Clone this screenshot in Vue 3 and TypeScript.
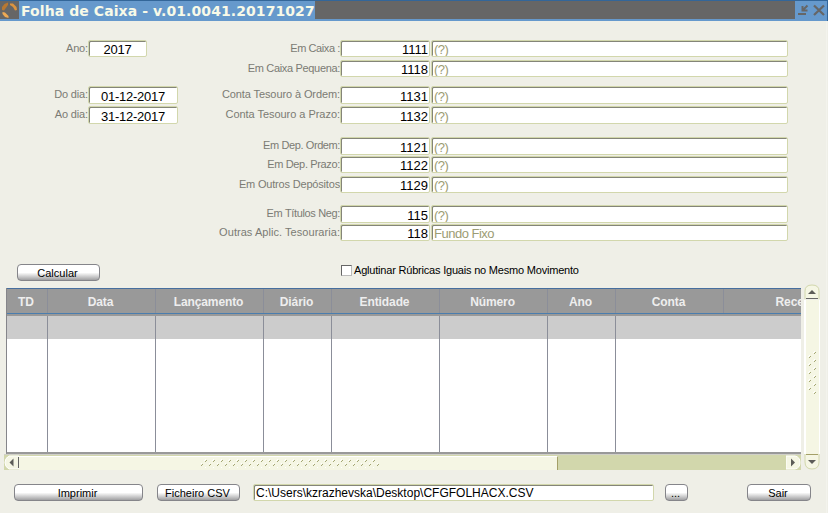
<script setup lang="ts">
interface Row {
  label: string
  code: string
  desc: string
  spacing: number
  tall?: boolean
  left?: { label: string; value: string; kind: string }
}

const rows: Row[] = [
  { label: 'Em Caixa :', spacing: -0.4, code: '1111', desc: '(?)', left: { label: 'Ano:', value: '2017', kind: 'year' } },
  { label: 'Em Caixa Pequena:', spacing: -0.33, code: '1118', desc: '(?)' },
  { label: 'Conta Tesouro à Ordem:', spacing: -0.1, code: '1131', desc: '(?)', tall: true, left: { label: 'Do dia:', value: '01-12-2017', kind: 'date' } },
  { label: 'Conta Tesouro a Prazo:', spacing: -0.04, code: '1132', desc: '(?)', tall: true, left: { label: 'Ao dia:', value: '31-12-2017', kind: 'date' } },
  { label: 'Em Dep. Ordem:', spacing: -0.4, code: '1121', desc: '(?)', tall: true },
  { label: 'Em Dep. Prazo:', spacing: -0.35, code: '1122', desc: '(?)' },
  { label: 'Em Outros Depósitos', spacing: -0.18, code: '1129', desc: '(?)' },
  { label: 'Em Títulos Neg:', spacing: -0.35, code: '115', desc: '(?)', tall: true },
  { label: 'Outras Aplic. Tesouraria:', spacing: 0.05, code: '118', desc: 'Fundo Fixo' },
]

const columns: string[] = ['TD', 'Data', 'Lançamento', 'Diário', 'Entidade', 'Número', 'Ano', 'Conta', 'Receita']
</script>

<template>
  <div class="window">
    <header class="titlebar">
      <svg class="logo" width="19" height="18" viewBox="0 0 19 18">
        <rect width="19" height="18" fill="#666" />
        <path d="M8 1.500 4.500 3 2 6v3l2 .5L8 4z" fill="#b87832" />
        <path d="M10 2.500h3L16.500 6l.5 3-2 .5L13 6l-3-2z" fill="#dc943f" />
        <path d="M2.500 11 5 11.500 8.500 15v2L5 16l-2.500-3z" fill="#eeaa54" />
      </svg>
      <h1 class="title"><span>Folha de Caixa - v.01.0041.20171027</span></h1>
      <div class="rest"></div>
      <svg class="controls" width="32" height="19" viewBox="0 0 32 19">
        <g stroke="#666" fill="none">
          <path d="M3 13h8" stroke-width="2" />
          <path d="M12.500 4.500 8 9M7.500 5v4.500h5" stroke-width="2" />
          <path d="m19 4.500 10 9.500M29 4.500 19 14" stroke-width="2.300" />
        </g>
      </svg>
    </header>

    <main class="content">
      <section class="form">
        <template v-for="row in rows" :key="row.code">
          <label class="label side">{{ row.left?.label }}</label>
          <div class="slot">
            <div v-if="row.left" class="field center" :class="[row.left.kind, { tall: row.tall }]">{{ row.left.value }}</div>
          </div>
          <label class="label" :style="{ letterSpacing: row.spacing + 'px' }">{{ row.label }}</label>
          <div class="field code" :class="{ tall: row.tall }">{{ row.code }}</div>
          <div class="field desc" :class="{ tall: row.tall }">{{ row.desc }}</div>
        </template>
      </section>

      <section class="actions">
        <button class="btn calc">Calcular</button>
        <div class="check"><i class="box"></i><span>Aglutinar Rúbricas Iguais no Mesmo Movimento</span></div>
      </section>

      <section class="data">
        <div class="left-pane">
          <div class="table">
            <div class="cols head"><div v-for="c in columns" :key="c"><span>{{ c }}</span></div></div>
            <div class="cols selected"><div v-for="c in columns" :key="c"></div></div>
            <div class="cols blank"><div v-for="c in columns" :key="c"></div></div>
          </div>
          <div class="hscroll">
            <svg class="end-l" width="15" height="15" viewBox="0 0 15 15">
              <path d="M15 1H5Q1 3 1 7.500T5 14h10z" fill="#f5f6e4" stroke="#fff" />
              <path d="m5.500 7.500 4-4v8z" fill="#5c5c58" />
              <path d="M14.500 2v11" stroke="#666" />
            </svg>
            <div class="thumb">
              <svg width="180" height="10">
                <defs>
                  <pattern id="grip-h" width="8" height="8" patternUnits="userSpaceOnUse">
                    <path d="m4 3 2-2M0 7l2-2" stroke="#a4a675" />
                    <path d="m3 2 2-2M-1 6l2-2" stroke="#fff" />
                  </pattern>
                </defs>
                <rect width="179" height="9" fill="url(#grip-h)" />
              </svg>
            </div>
            <svg class="end-r" width="15" height="15" viewBox="0 0 15 15">
              <path d="M0 1h9q5 1 5 6.500T9 14H0z" fill="#f5f6e4" stroke="#fff" />
              <path d="m9 7.500-4-4v8z" fill="#5c5c58" />
            </svg>
          </div>
        </div>
        <div class="vscroll">
          <svg width="16" height="16" viewBox="0 0 16 16">
            <path d="M1 15V7q0-6 7-6t7 6v8" fill="#f5f6e4" stroke="#d2d7ac" />
            <path d="m4 10 4-4 4 4z" fill="#5c5c58" />
            <path d="M2 14.500h12" stroke="#666" />
          </svg>
          <div class="vthumb">
            <svg width="10" height="45">
              <defs>
                <pattern id="grip-v" width="10" height="8" patternUnits="userSpaceOnUse">
                  <path d="m6 3 2-2M1 7l2-2" stroke="#a4a675" />
                  <path d="m5 2 2-2M0 6l2-2" stroke="#fff" />
                </pattern>
              </defs>
              <rect width="10" height="44" fill="url(#grip-v)" />
            </svg>
          </div>
          <svg width="16" height="16" viewBox="0 0 16 16">
            <path d="M1 0v8q0 7 7 7t7-7V0" fill="#f5f6e4" stroke="#d2d7ac" />
            <path d="m4 6 4 4 4-4z" fill="#5c5c58" />
            <path d="M2 .5h12" stroke="#a4a068" />
          </svg>
        </div>
      </section>

      <footer class="footer">
        <button class="btn print">Imprimir</button>
        <button class="btn csv">Ficheiro CSV</button>
        <div class="field path">C:\Users\kzrazhevska\Desktop\CFGFOLHACX.CSV</div>
        <button class="btn browse">...</button>
        <button class="btn exit">Sair</button>
      </footer>
    </main>
  </div>
</template>

<style>
body {
  margin: 0;
  background: #efefe7;
}
</style>

<style scoped>
* {
  box-sizing: border-box;
}
.window {
  width: 828px;
  height: 513px;
  overflow: hidden;
  background: #efefe7;
  font-family: "Liberation Sans", Arial, sans-serif;
  display: flex;
  flex-direction: column;
}
.titlebar {
  height: 21px;
  flex: none;
  display: flex;
  background: #6699cc;
  border-top: 1px solid #336699;
  border-right: 1px solid #336699;
}
.titlebar svg {
  flex: none;
}
.title {
  margin: 0;
  width: 296px;
  flex: none;
  padding-left: 2px;
  font: bold 14px/20px "DejaVu Sans", Verdana, sans-serif;
  letter-spacing: 0.08px;
  color: #f8fae8;
  white-space: nowrap;
}
.rest {
  flex: 1;
  height: 18px;
  background: #666;
}
.content {
  width: 827px;
  flex: 1;
  border-right: 1px solid #f3f3ed;
}
.form {
  height: 243px;
  padding-top: 19px;
  display: grid;
  grid-template-columns: 88px 120px 132px 91px 357px;
  grid-template-rows: 20px 26px 20px 31px 19px 20px 29px 19px 18px;
  align-items: start;
}
.label {
  text-align: right;
  font-size: 11px;
  line-height: 16px;
  color: #7b7b74;
  white-space: nowrap;
}
.side {
  letter-spacing: -0.15px;
}
.field {
  height: 17px;
  border: 1px solid #d2d7ac;
  border-radius: 2px;
  background: #fff;
  box-shadow: inset 1px 1px 0 #848578;
  font-size: 13px;
  line-height: 18px;
  color: #000;
  white-space: nowrap;
  overflow: hidden;
}
.field.tall {
  height: 18px;
  line-height: 19px;
}
.center {
  text-align: center;
  letter-spacing: -0.25px;
}
.year {
  width: 59px;
}
.date {
  width: 90px;
}
.code {
  width: 90px;
  padding-right: 1px;
  text-align: right;
}
.desc {
  padding-left: 2px;
  letter-spacing: -0.5px;
  color: #9c9c74;
}
.actions {
  height: 20px;
  padding-left: 17px;
  display: flex;
}
.btn {
  height: 17px;
  padding: 1px 2px 0 0;
  flex: none;
  border: 1px solid #85858a;
  border-radius: 4px;
  background: linear-gradient(#fff 50%, #e3e3e3 65%, #a0a0a2);
  font: 11px/14px "Liberation Sans", Arial, sans-serif;
  color: #000;
}
.calc {
  width: 83px;
}
.check {
  margin-left: 241px;
  display: flex;
  gap: 2px;
  font-size: 11px;
  line-height: 12px;
  letter-spacing: -0.2px;
  white-space: nowrap;
}
.box {
  width: 11px;
  height: 11px;
  margin-top: 1px;
  border: 1px solid #666;
  border-right-color: #bbb;
  border-bottom-color: #bbb;
  background: #fff;
}
.data {
  display: flex;
  gap: 2px;
  padding-left: 4px;
  height: 186px;
}
.left-pane {
  width: 798px;
  padding-top: 4px;
}
.table {
  width: 795px;
  margin-left: 2px;
  height: 166px;
  border-left: 1px solid #85858a;
  border-bottom: 2px solid #999;
  background: #fff;
  overflow: hidden;
}
.cols {
  display: grid;
  width: 865px;
  grid-template-columns: 41px 108px 108px 68px 108px 108px 68px 108px 148px;
}
.cols > div {
  border-right: 1px solid #8b8e99;
}
.head {
  height: 26px;
  border-top: 1px solid #476f9f;
  border-bottom: 1px solid #4a7dae;
  background: #999;
  color: #eee;
  font-weight: bold;
  font-size: 12px;
  line-height: 26px;
  letter-spacing: -0.1px;
  text-align: center;
}
.head > div {
  height: 24px;
  padding-right: 2px;
}
.selected {
  height: 25px;
  border-top: 2px solid #999;
  background: #ccc;
}
.blank {
  height: 114px;
}
.selected > div:nth-child(8),
.blank > div:nth-child(8) {
  border-right: 0;
}
.hscroll {
  width: 797px;
  height: 16px;
  display: flex;
  align-items: center;
  background: #d2d7ac;
  border-top: 1px solid #d0d0c8;
}
.thumb {
  width: 539px;
  height: 14px;
  background: #f5f6e4;
  border-top: 1px solid #fff;
  border-right: 1px solid #a4a068;
  padding: 2px 0 0 182px;
}
.thumb svg,
.vthumb svg {
  display: block;
}
.end-r {
  margin-left: auto;
}
.vscroll {
  width: 16px;
  display: flex;
  flex-direction: column;
}
.vscroll > svg {
  flex: none;
}
.vthumb {
  flex: 1;
  background: #f5f6e4;
  border: solid #fff;
  border-width: 0 1px 0 2px;
  padding: 51px 0 0 2px;
}
.footer {
  margin-top: 14px;
  padding-left: 14px;
  display: flex;
}
.print {
  width: 129px;
}
.csv {
  width: 83px;
  margin-left: 14px;
}
.path {
  width: 401px;
  height: 17px;
  margin-left: 13px;
  padding-left: 2px;
  font-size: 12px;
  line-height: 17px;
}
.browse {
  width: 23px;
  margin-left: 11px;
}
.exit {
  width: 64px;
  margin-left: 59px;
}
</style>
